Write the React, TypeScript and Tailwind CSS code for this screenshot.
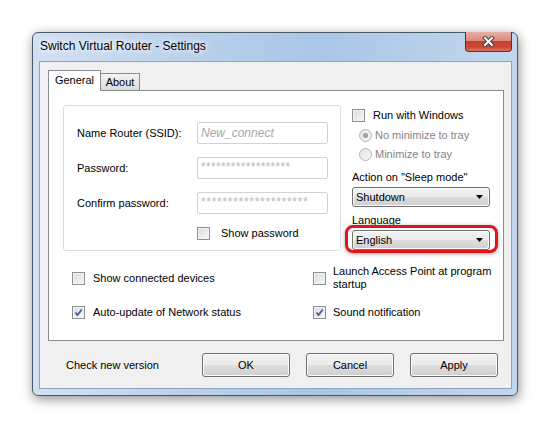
import React from 'react';

function CheckBox({ checked }: { checked?: boolean }) {
  return (
    <span className="relative w-[13px] h-[13px] shrink-0 border border-[#8e8f8f] bg-[linear-gradient(135deg,#d9dbde_0%,#f7f7f7_100%)] shadow-[inset_0_0_0_1px_#f4f4f4]">
      {checked && (
        <svg className="absolute left-[1px] top-[1px]" width="9" height="9" viewBox="0 0 9 9">
          <path d="M1.5 4.5 L3.5 7 L7.8 1.5" fill="none" stroke="#4a5f9c" strokeWidth="1.8" />
        </svg>
      )}
    </span>
  );
}

function Radio({ selected }: { selected?: boolean }) {
  return (
    <span className="w-[13px] h-[13px] shrink-0 rounded-full border border-[#b3b3b3] bg-[linear-gradient(135deg,#e3e3e3,#f8f8f8)] flex items-center justify-center">
      {selected && <span className="w-[5px] h-[5px] rounded-full bg-[#a0a0a0]" />}
    </span>
  );
}

function Select({ value }: { value: string }) {
  return (
    <div className="w-[138px] h-[20px] rounded-[3px] border border-[#707070] bg-[linear-gradient(#f2f2f2_0%,#ebebeb_50%,#dddddd_51%,#cfcfcf_100%)] flex items-center justify-between pl-[3px] pr-[6px] shadow-[inset_0_0_0_1px_#fbfbfb]">
      <span>{value}</span>
      <svg width="7" height="4" viewBox="0 0 7 4">
        <path d="M0 0 H7 L3.5 4 Z" fill="#000" />
      </svg>
    </div>
  );
}

function Button({ label }: { label: string }) {
  return (
    <button className="w-[88px] h-[24px] rounded-[3px] border border-[#707070] bg-[linear-gradient(#f2f2f2_0%,#ebebeb_50%,#dddddd_51%,#cfcfcf_100%)] shadow-[inset_0_0_0_1px_#fcfcfc] text-[11px] text-black">
      {label}
    </button>
  );
}

export default function App() {
  return (
    <div className="w-[550px] h-[429px] bg-white pt-[32px] pl-[32px] font-['Liberation_Sans',Arial,sans-serif] text-[11px] text-black overflow-hidden">
      {/* window */}
      <div className="w-[486px] h-[364px] rounded-[6px] border border-[#4b5866] bg-[linear-gradient(90deg,#d2e1f2_0%,#b7cfea_35%,#aac6e6_60%,#c3d7ee_100%)] shadow-[1px_3px_12px_rgba(0,0,0,0.45)] flex flex-col">
        {/* title bar */}
        <div className="h-[28px] shrink-0 flex items-start justify-between pl-[7px]">
          <span className="mt-[6px] text-[12px] leading-[14px] [text-shadow:0_0_6px_#ffffff,0_0_10px_#ffffff]">
            Switch Virtual Router - Settings
          </span>
          <div className="-mt-[1px] mr-[5px] w-[47px] h-[20px] rounded-b-[4px] border border-[#6e2b24] border-t-0 bg-[linear-gradient(#e9aea5_0%,#dc8a7e_45%,#c7412f_50%,#cc4836_80%,#dd7662_100%)] flex items-center justify-center">
            <svg width="13" height="11" viewBox="0 0 13 11">
              <path d="M3 2 L10 9 M10 2 L3 9" stroke="#404040" strokeWidth="4" strokeLinecap="square" />
              <path d="M3 2 L10 9 M10 2 L3 9" stroke="#ffffff" strokeWidth="2" strokeLinecap="square" />
            </svg>
          </div>
        </div>

        {/* client area */}
        <div className="ml-[6px] mr-[5px] mb-[6px] flex-1 border border-[#8fa5bf] bg-[#f0f0f0] flex flex-col">
          <div className="pl-[8px] pt-[8px]">
            {/* tabs */}
            <div className="flex items-end">
              <div className="relative z-10 w-[53px] h-[21px] -mb-[1px] border border-b-0 border-[#898c95] bg-white flex items-center justify-center pb-[2px]">
                General
              </div>
              <div className="w-[39px] h-[17px] border border-l-0 border-b-0 border-[#898c95] bg-[linear-gradient(#f3f3f3,#dadada)] flex items-center justify-center">
                About
              </div>
            </div>

            {/* tab panel */}
            <div className="w-[456px] h-[251px] border border-[#898c95] bg-white pl-[14px] pt-[14px]">
              <div className="h-[146px] flex items-start">
                {/* group box */}
                <div className="w-[278px] h-[146px] shrink-0 rounded-[3px] border border-[#d5dfe5] pl-[13px] pt-[16px]">
                  <div className="flex items-center h-[22px]">
                    <span className="w-[120px]">Name Router (SSID):</span>
                    <div className="w-[131px] h-[22px] border border-[#cdd3da] rounded-[2px] bg-white flex items-center pl-[3px] italic text-[#a8a8a8] text-[12px]">
                      New_connect
                    </div>
                  </div>
                  <div className="flex items-center h-[22px] mt-[13px]">
                    <span className="w-[120px]">Password:</span>
                    <div className="w-[131px] h-[22px] border border-[#cdd3da] rounded-[2px] bg-white flex items-start pt-[2px] pl-[3px] text-[#b8b8b8] text-[12px] leading-[14px] tracking-[0.3px]">
                      ******************
                    </div>
                  </div>
                  <div className="flex items-center h-[22px] mt-[13px]">
                    <span className="w-[120px]">Confirm password:</span>
                    <div className="w-[131px] h-[22px] border border-[#cdd3da] rounded-[2px] bg-white flex items-start pt-[2px] pl-[3px] text-[#b8b8b8] text-[12px] leading-[14px] tracking-[0.7px]">
                      ********************
                    </div>
                  </div>
                  <div className="flex items-center h-[13px] mt-[13px] pl-[120px] gap-[11px]">
                    <CheckBox />
                    <span>Show password</span>
                  </div>
                </div>

                {/* right column */}
                <div className="ml-[11px] w-[138px] flex flex-col">
                  <div className="mt-[4px] h-[13px] flex items-center gap-[8px]">
                    <CheckBox />
                    <span>Run with Windows</span>
                  </div>
                  <div className="mt-[7px] h-[13px] flex items-center gap-[3px] pl-[7px] text-[#858585]">
                    <Radio selected />
                    <span>No minimize to tray</span>
                  </div>
                  <div className="mt-[6px] h-[13px] flex items-center gap-[3px] pl-[7px] text-[#858585]">
                    <Radio />
                    <span>Minimize to tray</span>
                  </div>
                  <div className="mt-[9px] h-[14px] leading-[14px]">Action on "Sleep mode"</div>
                  <div className="mt-[3px]">
                    <Select value="Shutdown" />
                  </div>
                  <div className="mt-[6px] h-[14px] leading-[14px]">Language</div>
                  <div className="-mt-[2px] -ml-[7px] w-[153px] h-[28px] rounded-[8px] border-[3px] border-[#e3141c] bg-white shadow-[0_1px_4px_rgba(0,0,0,0.35)] pl-[4px] pt-[2px]">
                    <Select value="English" />
                  </div>
                </div>
              </div>

              {/* bottom checkboxes */}
              <div className="mt-[14px] pl-[9px] grid grid-cols-[241px_1fr] gap-y-[13px] items-center">
                <div className="flex items-center gap-[8px]">
                  <CheckBox />
                  <span>Show connected devices</span>
                </div>
                <div className="flex items-center gap-[7px]">
                  <CheckBox />
                  <span className="w-[160px] leading-[13px]">Launch Access Point at program startup</span>
                </div>
                <div className="flex items-center gap-[8px]">
                  <CheckBox checked />
                  <span>Auto-update of Network status</span>
                </div>
                <div className="flex items-center gap-[7px]">
                  <CheckBox checked />
                  <span>Sound notification</span>
                </div>
              </div>
            </div>
          </div>

          {/* bottom buttons */}
          <div className="mt-[12px] pl-[26px] flex items-center">
            <span className="w-[136px]">Check new version</span>
            <div className="flex gap-[16px]">
              <Button label="OK" />
              <Button label="Cancel" />
              <Button label="Apply" />
            </div>
          </div>
        </div>
      </div>
    </div>
  );
}
